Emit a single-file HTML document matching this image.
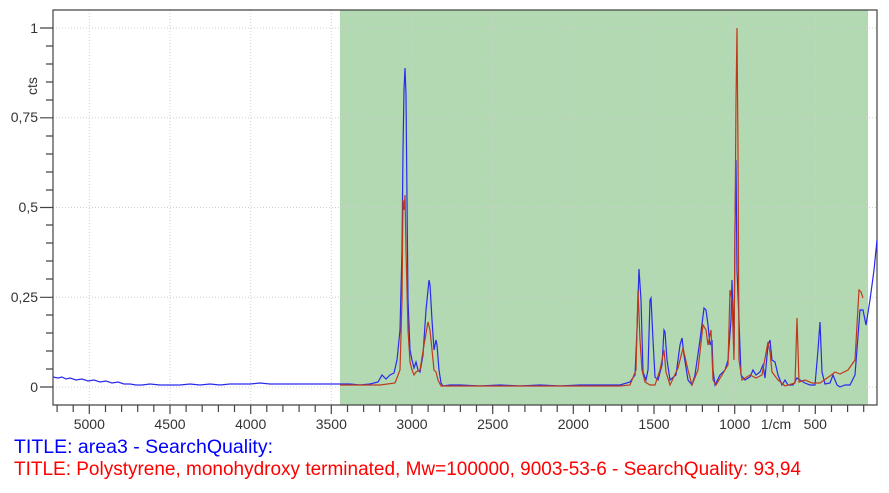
<!DOCTYPE html>
<html><head><meta charset="utf-8"><style>
html,body{margin:0;padding:0;background:#fff;width:889px;height:493px;overflow:hidden}
svg{display:block}
text{font-family:"Liberation Sans",Arial,sans-serif}
</style></head><body>
<svg width="889" height="493" viewBox="0 0 889 493" xmlns="http://www.w3.org/2000/svg">
<rect x="340" y="10" width="528" height="395" fill="#b3d9b3"/>
<g stroke="#cfcfcf" stroke-width="1" stroke-dasharray="1,2" fill="none">
<path d="M53 28H877M53 117.8H877M53 207.5H877M53 297.3H877M53 387H877"/>
<path d="M89.3 10V405M170 10V405M250.7 10V405M331.3 10V405M412 10V405M492.7 10V405M573.3 10V405M654 10V405M734.7 10V405M815.3 10V405"/>
</g>
<path d="M53 10H877V405H53Z" fill="none" stroke="#444" stroke-width="1.2"/>
<g stroke="#444" stroke-width="1.2" fill="none">
<path d="M46 369H53M46 351H53M46 333H53M46 315H53M46 279H53M46 261H53M46 243H53M46 225H53M46 190H53M46 172H53M46 154H53M46 136H53M46 100H53M46 82H53M46 64H53M46 46H53"/>
<path d="M40 387H53M40 297.3H53M40 207.5H53M40 117.8H53M40 28H53"/>
<path d="M57.1 405v7M73.2 405v7M105.5 405v7M121.6 405v7M137.7 405v7M153.8 405v7M186.1 405v7M202.2 405v7M218.4 405v7M234.5 405v7M266.8 405v7M282.9 405v7M299.1 405v7M315.2 405v7M347.5 405v7M363.6 405v7M379.7 405v7M395.9 405v7M428.1 405v7M444.3 405v7M460.4 405v7M476.5 405v7M508.8 405v7M524.9 405v7M541.1 405v7M557.2 405v7M589.5 405v7M605.6 405v7M621.7 405v7M637.9 405v7M670.1 405v7M686.3 405v7M702.4 405v7M718.5 405v7M750.8 405v7M766.9 405v7M783.1 405v7M799.2 405v7M831.5 405v7M847.6 405v7M863.7 405v7"/>
<path d="M89.3 405v9M170 405v9M250.7 405v9M331.3 405v9M412 405v9M492.7 405v9M573.3 405v9M654 405v9M734.7 405v9M815.3 405v9"/>
</g>
<g font-size="14" fill="#333" text-anchor="end">
<text x="38" y="392">0</text>
<text x="38" y="302">0,25</text>
<text x="38" y="212">0,5</text>
<text x="38" y="122">0,75</text>
<text x="38" y="33">1</text>
</g>
<text x="0" y="0" font-size="14" fill="#333" transform="translate(37,95) rotate(-90)">cts</text>
<g font-size="14" fill="#333" text-anchor="middle">
<text x="89.3" y="429">5000</text><text x="170" y="429">4500</text><text x="250.7" y="429">4000</text><text x="331.3" y="429">3500</text><text x="412" y="429">3000</text><text x="492.7" y="429">2500</text><text x="573.3" y="429">2000</text><text x="654" y="429">1500</text><text x="734.7" y="429">1000</text><text x="776" y="429">1/cm</text><text x="815.3" y="429">500</text>
</g>
<polyline fill="none" stroke="#2a2aee" stroke-width="1.2" points="53,377 58,378 62,377 66,379 70,378 76,380 82,379 88,381 94,380 100,382 106,381 112,383 118,382 124,384 130,384 136,385 142,385 150,384 160,385 170,385 180,385 190,384 200,385 210,384 220,385 230,384 240,384 250,384 260,383 270,384 280,384 290,384 300,384 310,384 320,384 330,384 340,384 350,384 360,385 370,384 378,382 382,375 386,379 390,375 394,373 397,360 400,330 402,250 403,150 404,90 405,68 406,95 407,200 408,300 410,350 412,360 414,368 416,362 418,370 420,372 423,355 426,310 428,290 429,280 430,285 432,320 434,350 436,340 437,345 439,370 441,383 443,386 450,385 460,385 480,386 500,385 520,386 540,385 560,386 580,385 600,385 620,385 630,382 635,375 637,330 639,269 641,300 643,372 646,380 648,370 650,300 651,298 653,340 655,377 658,380 662,365 664,330 665,332 667,360 670,380 676,375 680,345 682,338 684,355 688,380 692,385 695,375 700,340 704,308 706,310 708,325 710,345 712,340 713,370 715,385 720,375 725,370 728,360 731,320 732,280 734,350 735,225 736,160 737,270 739,320 741,375 745,380 750,377 753,370 756,375 760,372 763,365 765,378 768,345 770,340 772,360 775,362 778,375 782,385 785,380 788,385 793,385 797,378 800,380 805,383 810,385 815,385 818,350 820,322 822,372 825,384 830,383 833,375 837,385 840,387 845,385 850,385 855,375 860,310 863,310 866,325 870,300 874,270 877,240"/>
<polyline fill="none" stroke="#c0391b" stroke-width="1.2" points="340,385 360,385 380,385 395,383 400,370 402,300 403,200 404,210 405,195 406,250 408,330 410,362 412,370 414,375 416,372 420,370 424,345 428,322 430,330 432,350 434,370 436,372 438,380 441,386 460,386 500,386 540,386 580,386 620,386 630,385 636,370 638,290 640,340 642,370 645,382 650,385 655,385 660,370 664,350 666,372 670,385 678,368 683,348 688,370 692,385 698,370 703,325 706,330 708,345 711,330 713,380 716,385 722,375 728,365 730,290 732,300 734,360 736,100 737,28 738,150 739,360 742,380 750,375 756,378 762,375 768,342 770,352 772,372 778,380 785,386 795,383 797,318 799,382 805,380 812,383 820,383 830,376 835,372 840,374 848,370 855,360 859,290 861,292 863,298"/>
<text x="14" y="453" font-size="19" fill="#0000ff" textLength="259" lengthAdjust="spacingAndGlyphs">TITLE: area3 - SearchQuality:</text>
<text x="14" y="475" font-size="19" fill="#ff0000" textLength="787" lengthAdjust="spacingAndGlyphs">TITLE:  Polystyrene, monohydroxy terminated, Mw=100000, 9003-53-6 - SearchQuality: 93,94</text>
</svg>
</body></html>
